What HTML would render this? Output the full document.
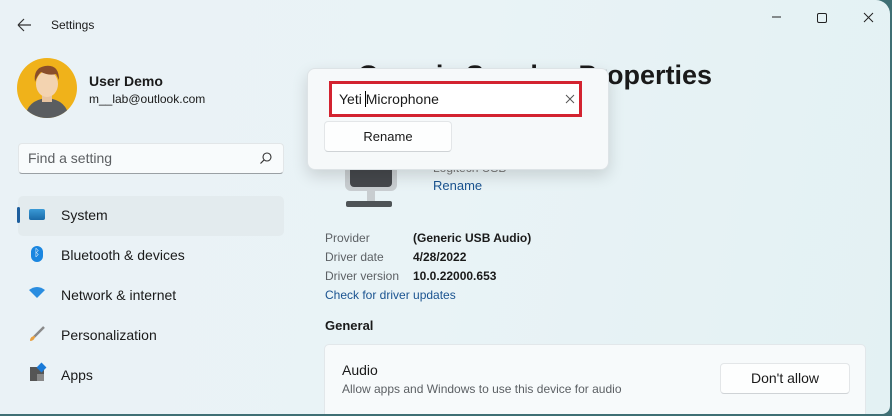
<!DOCTYPE html>
<html><head><meta charset="utf-8"><style>
*{margin:0;padding:0;box-sizing:border-box}
body{width:892px;height:416px;overflow:hidden;background:#3f6f74;font-family:"Liberation Sans",sans-serif;color:#1a1a1a;position:relative}
.win{position:absolute;left:0;top:0;width:890px;height:414px;overflow:hidden;background:linear-gradient(100deg,#eaf2f6 0%,#e9f3f6 50%,#e3f1f3 100%);border-radius:0 14px 8px 0}
.a{position:absolute;white-space:nowrap}
.nav{position:absolute;left:18px;width:266px;height:40px;border-radius:5px;font-size:14px}
.nav span{position:absolute;left:43px;top:11px}
</style></head><body><div class="win">
<svg class="a" style="left:17px;top:18px" width="16" height="14"><path d="M1 7H14M1 7L7 1M1 7L7 13" stroke="#333" stroke-width="1.2" fill="none"/></svg>
<div class="a" style="left:51px;top:18px;font-size:12px">Settings</div>
<svg class="a" style="left:770px;top:10px" width="110" height="20"><path d="M2 7H11" stroke="#222" stroke-width="1"/><rect x="47.5" y="3.5" width="9" height="9" rx="1.5" stroke="#222" fill="none"/><path d="M94 3L103 12M103 3L94 12" stroke="#222" stroke-width="1"/></svg>
<svg class="a" style="left:17px;top:58px" width="60" height="60"><defs><clipPath id="c"><circle cx="30" cy="30" r="30"/></clipPath></defs><circle cx="30" cy="30" r="30" fill="#f0b21a"/><g clip-path="url(#c)"><path d="M8 60Q10 42 30 40Q50 42 52 60Z" fill="#5a5d60"/><rect x="25" y="34" width="10" height="10" fill="#e8c4a0"/><ellipse cx="30" cy="26" rx="11" ry="13" fill="#f3d3b0"/><path d="M18 24Q16 10 28 8Q42 6 42 22L39 16Q32 18 24 14Q20 18 18 24Z" fill="#8a4e2a"/></g></svg>
<div class="a" style="left:89px;top:73px;font-size:14px;font-weight:bold">User Demo</div>
<div class="a" style="left:89px;top:92px;font-size:12px">m__lab@outlook.com</div>
<div class="a" style="left:18px;top:143px;width:266px;height:31px;background:#f8fbfc;border:1px solid #e2e6e8;border-bottom-color:#9aa0a4;border-radius:4px"></div>
<div class="a" style="left:28px;top:150px;font-size:14px;color:#5c5f62">Find a setting</div>
<svg class="a" style="left:259px;top:151px" width="14" height="14"><circle cx="8" cy="6" r="4" stroke="#333" fill="none" stroke-width="1.1"/><path d="M5 9L1.5 12.5" stroke="#333" stroke-width="1.2"/></svg>
<div class="nav" style="top:196px;background:#e3ebee"><span>System</span></div>
<div class="a" style="left:17px;top:207px;width:3px;height:16px;background:#1e5f9e;border-radius:2px"></div>
<div class="a" style="left:29px;top:209px;width:16px;height:11px;background:linear-gradient(#3a9ad6,#1a6aa8);border-radius:2px"></div>
<div class="nav" style="top:236px"><span>Bluetooth &amp; devices</span></div>
<div class="a" style="left:31px;top:246px;width:12px;height:16px;background:#1a86e0;border-radius:6px;color:#fff;font-size:10px;text-align:center;line-height:16px">ᛒ</div>
<div class="nav" style="top:276px"><span>Network &amp; internet</span></div>
<svg class="a" style="left:28px;top:287px" width="18" height="12"><path d="M1 3Q9 -3 17 3L9 11Z" fill="#2a8de0"/></svg>
<div class="nav" style="top:316px"><span>Personalization</span></div>
<svg class="a" style="left:28px;top:325px" width="18" height="18"><path d="M16 2L6 12" stroke="#8a8a8a" stroke-width="2.5"/><path d="M7 11Q2 11 2 16Q6 16 7 12Z" fill="#e8a040"/></svg>
<div class="nav" style="top:356px"><span>Apps</span></div>
<div class="a" style="left:30px;top:367px;width:14px;height:14px;background:#555"></div><div class="a" style="left:37px;top:374px;width:7px;height:7px;background:#888"></div><div class="a" style="left:38px;top:364px;width:7px;height:7px;background:#1a7ad8;transform:rotate(45deg)"></div>
<div class="a" style="left:325px;top:60px;font-size:27px;font-weight:bold;width:387px;text-align:right">Generic Speaker Properties</div>
<div class="a" style="left:433px;top:161px;font-size:12px;color:#777">Logitech USB</div>
<div class="a" style="left:433px;top:178px;font-size:13px;color:#1a5390">Rename</div>
<svg class="a" style="left:345px;top:165px" width="56" height="52"><rect x="0" y="0" width="52" height="26" rx="6" fill="#c8cdd0"/><rect x="5" y="0" width="42" height="22" rx="4" fill="#45484c"/><rect x="22" y="26" width="8" height="10" fill="#c8cdd0"/><rect x="1" y="36" width="46" height="6" rx="2" fill="#4f5457"/></svg>
<div class="a" style="left:307px;top:68px;width:302px;height:102px;background:#f6f9fa;border:1px solid #dde3e6;border-radius:8px;box-shadow:0 6px 16px rgba(0,0,0,.14)"></div>
<div class="a" style="left:329px;top:81px;width:253px;height:36px;border:3px solid #d32330;background:#fff"></div>
<div class="a" style="left:339px;top:91px;font-size:14px">Yeti <span style="border-left:1px solid #000;margin-left:-1px">M</span>icrophone</div>
<svg class="a" style="left:565px;top:94px" width="10" height="10"><path d="M1 1L9 9M9 1L1 9" stroke="#555" stroke-width="1"/></svg>
<div class="a" style="left:324px;top:121px;width:128px;height:31px;background:#fdfefe;border:1px solid #e3e6e8;border-bottom-color:#cfd3d6;border-radius:4px;font-size:13px;text-align:center;line-height:30px">Rename</div>
<div class="a" style="left:325px;top:231px;font-size:12px;color:#5c6064">Provider</div>
<div class="a" style="left:325px;top:250px;font-size:12px;color:#5c6064">Driver date</div>
<div class="a" style="left:325px;top:269px;font-size:12px;color:#5c6064">Driver version</div>
<div class="a" style="left:413px;top:231px;font-size:12px;font-weight:bold">(Generic USB Audio)</div>
<div class="a" style="left:413px;top:250px;font-size:12px;font-weight:bold">4/28/2022</div>
<div class="a" style="left:413px;top:269px;font-size:12px;font-weight:bold">10.0.22000.653</div>
<div class="a" style="left:325px;top:288px;font-size:12px;color:#1a5390">Check for driver updates</div>
<div class="a" style="left:325px;top:318px;font-size:13px;font-weight:bold">General</div>
<div class="a" style="left:324px;top:344px;width:542px;height:80px;background:#f7fafb;border:1px solid #e2e7ea;border-radius:5px"></div>
<div class="a" style="left:342px;top:362px;font-size:14px">Audio</div>
<div class="a" style="left:342px;top:382px;font-size:12px;color:#5c6064">Allow apps and Windows to use this device for audio</div>
<div class="a" style="left:720px;top:363px;width:130px;height:31px;background:#fdfefe;border:1px solid #e3e6e8;border-bottom-color:#cfd3d6;border-radius:4px;font-size:14px;text-align:center;line-height:29px">Don't allow</div>
</div></body></html>
